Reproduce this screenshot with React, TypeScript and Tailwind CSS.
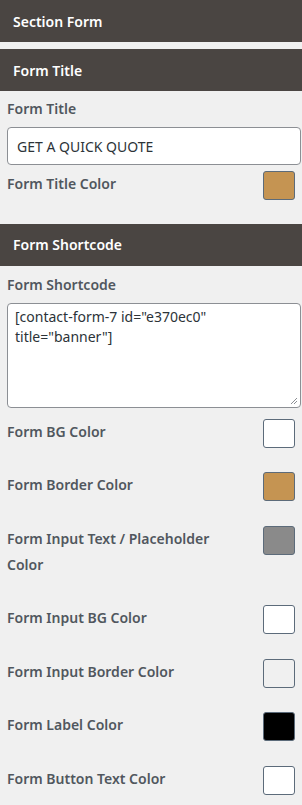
const rows: { label: string; color: string }[] = [
  { label: "Form BG Color", color: "#ffffff" },
  { label: "Form Border Color", color: "#c59452" },
  { label: "Form Input Text / Placeholder Color", color: "#8a8a8a" },
  { label: "Form Input BG Color", color: "#ffffff" },
  { label: "Form Input Border Color", color: "#f0f0f0" },
  { label: "Form Label Color", color: "#000000" },
  { label: "Form Button Text Color", color: "#ffffff" },
];

function Header({ title, className = "" }: { title: string; className?: string }) {
  return (
    <div className={`flex h-[42px] items-center bg-[#4a4542] px-[13px] text-[14px] font-semibold text-white ${className}`}>
      {title}
    </div>
  );
}

function ColorRow({ label, color }: { label: string; color: string }) {
  return (
    <div className="mb-[27.5px] flex items-start justify-between">
      <span className="w-[225px] text-[14px] font-semibold leading-[26px] text-[#50575e]">{label}</span>
      <div
        className="mr-[6px] -mb-[3px] h-[29px] w-[32px] rounded-[3px] border border-[#5c6b7a]"
        style={{ backgroundColor: color }}
      />
    </div>
  );
}

export default function App() {
  return (
    <div className="min-h-[805px] w-[302px] bg-[#f0f0f0] font-['Noto_Sans',sans-serif]">
      <Header title="Section Form" className="h-[41px]" />
      <Header title="Form Title" className="mt-[7px]" />
      <div className="pl-[7px] pr-[1px]">
        <div className="mt-[5px] text-[14px] font-semibold leading-[26px] text-[#50575e]">Form Title</div>
        <div className="mt-[5px] flex h-[38px] items-center rounded-[4px] border border-[#8c8f94] bg-white px-[9px] text-[14px] text-[#2c3338]">
          GET A QUICK QUOTE
        </div>
        <div className="mt-[6px]">
          <ColorRow label="Form Title Color" color="#c59452" />
        </div>
      </div>
      <Header title="Form Shortcode" className="-mt-[1px]" />
      <div className="pl-[7px] pr-[1px]">
        <div className="mt-[6px] text-[14px] font-semibold leading-[26px] text-[#50575e]">Form Shortcode</div>
        <div className="relative mt-[5px] h-[105px] rounded-[4px] border border-[#8c8f94] bg-white px-[7px] py-[3px] text-[14px] leading-[20px] text-[#2c3338]">
          [contact-form-7 id="e370ec0"
          <br />
          title="banner"]
          <svg className="absolute bottom-[2px] right-[2px]" width="8" height="8" viewBox="0 0 8 8">
            <path d="M7 1L1 7M7 4L4 7" stroke="#8c8f94" strokeWidth="1" />
          </svg>
        </div>
        <div className="mt-[11px]">
          {rows.map((r) => (
            <ColorRow key={r.label} label={r.label} color={r.color} />
          ))}
        </div>
      </div>
    </div>
  );
}
